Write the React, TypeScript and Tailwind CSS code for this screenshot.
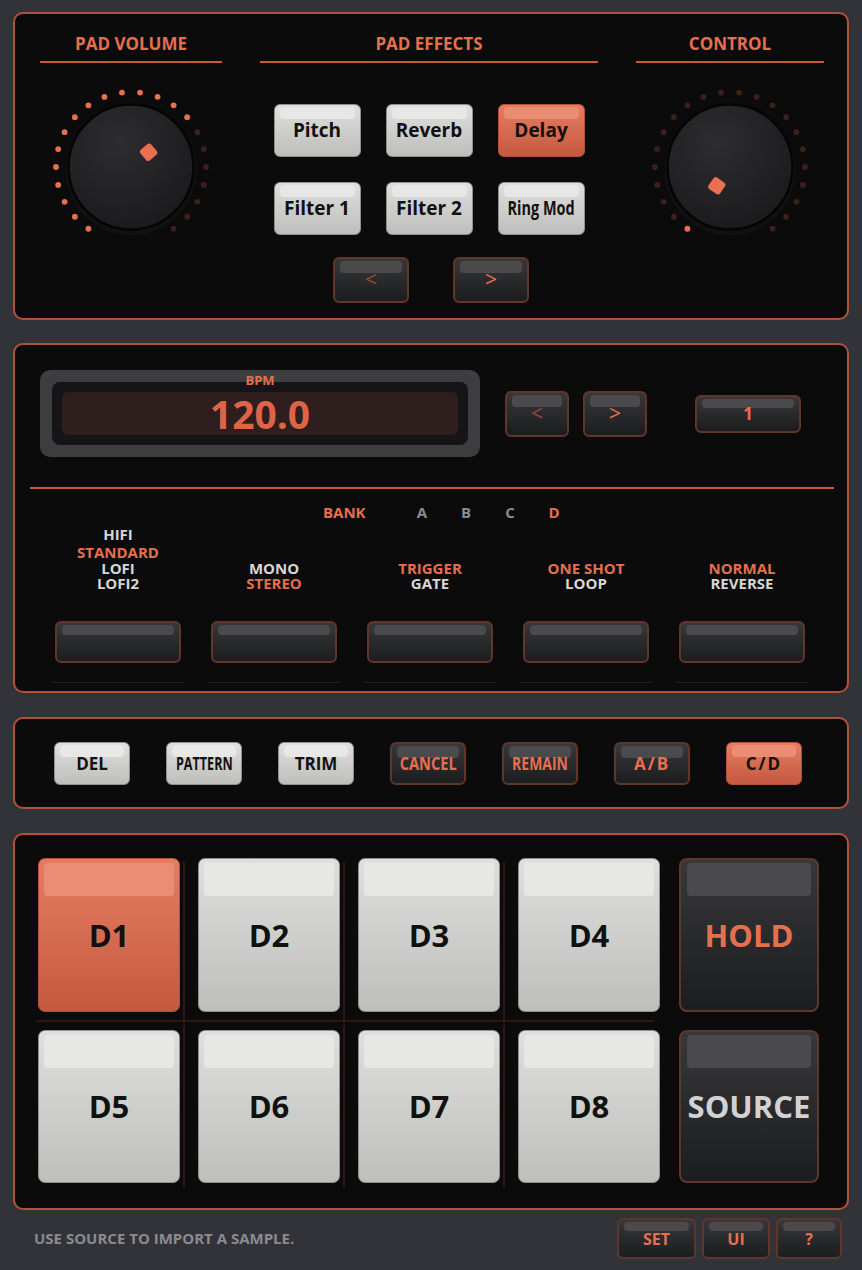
import React from "react";

type Variant = "light" | "dark" | "orange";

const body: Record<Variant, string> = {
  light: "border border-[#8f908c] bg-linear-to-b from-[#dfe0dd] to-[#bebfbb]",
  dark: "border-2 border-[#603629] bg-linear-to-b from-[#38383b] to-[#1c1d1f]",
  orange: "border border-[#b0523a] bg-linear-to-b from-[#e67d61] to-[#c45940]",
};

const ink: Record<Variant, string> = {
  light: "text-[#111]",
  dark: "text-[#e66f4e]",
  orange: "text-[#141010]",
};

const band: Record<Variant, string> = {
  light: "bg-[#e7e8e5]",
  dark: "bg-[#4a4a4d]",
  orange: "bg-[#eb8d74]",
};

function Btn({
  variant = "light",
  className = "",
  bandClass = "top-[2px] h-[12px] left-[5px] right-[5px]",
  textClass,
  children,
}: {
  variant?: Variant;
  className?: string;
  bandClass?: string;
  textClass?: string;
  children?: React.ReactNode;
}) {
  return (
    <div
      className={`relative flex items-center justify-center rounded-[6px] font-bold ${body[variant]} ${className}`}
    >
      <div className={`absolute rounded-[4px] ${band[variant]} ${bandClass}`} />
      <span className={`relative ${textClass ?? ink[variant]}`}>{children}</span>
    </div>
  );
}

function Knob({ id, lit, angle }: { id: string; lit: number; angle: number }) {
  const c = 85;
  const order = Array.from({ length: 26 }, (_, k) => (k + 15) % 26).filter(
    (k) => k < 11 || k > 14
  );
  const a = (angle * Math.PI) / 180;
  const ix = c + 23 * Math.sin(a);
  const iy = c - 23 * Math.cos(a);
  return (
    <svg width="170" height="170" viewBox="0 0 170 170">
      <defs>
        <radialGradient id={`kg-${id}`} cx="0.4" cy="0.3" r="0.8">
          <stop offset="0" stopColor="#2d2d30" />
          <stop offset="1" stopColor="#19191b" />
        </radialGradient>
      </defs>
      {order.map((k, i) => {
        const t = ((6.923 + 13.846 * k) * Math.PI) / 180;
        return (
          <circle
            key={k}
            cx={c + 75 * Math.sin(t)}
            cy={c - 75 * Math.cos(t)}
            r="2.9"
            fill={i < lit ? "#e8704f" : "#3c2019"}
          />
        );
      })}
      <circle cx={c} cy={c + 3} r="65.5" fill="#111112" />
      <circle cx={c} cy={c} r="62.5" fill={`url(#kg-${id})`} stroke="#050505" strokeWidth="2.5" />
      <rect
        x={ix - 7}
        y={iy - 7}
        width="14"
        height="14"
        rx="3"
        fill="#e8704f"
        transform={`rotate(${angle} ${ix} ${iy})`}
      />
    </svg>
  );
}

function Header({ children }: { children: React.ReactNode }) {
  return (
    <div className="border-b-2 border-[#c9583b] pt-[20px] pb-[7px] text-center text-[17px] leading-[20px] font-bold text-[#e66f4e]">
      {children}
    </div>
  );
}

const panel = "rounded-[10px] border-2 border-[#b2513a] bg-[#0b0b0b]";

const modes: { lines: [string, boolean][] }[] = [
  { lines: [["HIFI", false], ["STANDARD", true], ["LOFI", false], ["LOFI2", false]] },
  { lines: [["MONO", false], ["STEREO", true]] },
  { lines: [["TRIGGER", true], ["GATE", false]] },
  { lines: [["ONE SHOT", true], ["LOOP", false]] },
  { lines: [["NORMAL", true], ["REVERSE", false]] },
];

const small = "top-[2px] h-[9px] left-[5px] right-[5px]";

export default function App() {
  return (
    <div className="h-[1270px] w-[862px] bg-[#323338] px-[13px] pt-[12px] font-['Open_Sans','Noto_Sans',sans-serif]">
      {/* top: volume / effects / control */}
      <div className={`${panel} flex h-[308px] gap-[38px] pl-[25px] pr-[23px]`}>
        <div className="flex w-[182px] flex-col items-center">
          <div className="w-full">
            <Header>PAD VOLUME</Header>
          </div>
          <div className="mt-[19px]">
            <Knob id="vol" lit={15} angle={50} />
          </div>
        </div>

        <div className="flex w-[338px] flex-col">
          <Header>PAD EFFECTS</Header>
          <div className="mt-[41px] grid grid-cols-[87px_87px_87px] justify-center gap-[25px] text-[19px]">
            <Btn className="h-[53px]">Pitch</Btn>
            <Btn className="h-[53px]">Reverb</Btn>
            <Btn variant="orange" className="h-[53px]">Delay</Btn>
            <Btn className="h-[53px]">Filter 1</Btn>
            <Btn className="h-[53px]">Filter 2</Btn>
            <Btn className="h-[53px]">
              <span className="inline-block scale-x-[0.76] whitespace-nowrap">Ring Mod</span>
            </Btn>
          </div>
          <div className="mt-[22px] flex justify-center gap-[44px] pl-[4px]">
            <Btn variant="dark" className="h-[46px] w-[76px] text-[21px]" textClass="font-normal text-[#8f4a38]">
              &lt;
            </Btn>
            <Btn variant="dark" className="h-[46px] w-[76px] text-[21px]" textClass="font-normal text-[#e66f4e]">
              &gt;
            </Btn>
          </div>
        </div>

        <div className="flex w-[188px] flex-col items-center">
          <div className="w-full">
            <Header>CONTROL</Header>
          </div>
          <div className="mt-[19px]">
            <Knob id="ctl" lit={1} angle={215} />
          </div>
        </div>
      </div>

      {/* bpm / bank / modes */}
      <div className={`${panel} mt-[23px] h-[350px] pt-[25px]`}>
        <div className="flex items-center pl-[25px]">
          <div className="relative h-[87px] w-[440px] rounded-[10px] bg-[#3d3d40] p-[12px]">
            <div className="h-full rounded-[8px] bg-[#151517] p-[10px]">
              <div className="flex h-full items-center justify-center rounded-[6px] bg-[#2e1e1e] text-[39px] leading-none font-bold text-[#dd6447]">
                120.0
              </div>
            </div>
            <div className="absolute top-[2px] left-0 w-full text-center text-[13px] leading-[16px] font-bold text-[#e66f4e]">
              BPM
            </div>
          </div>
          <Btn variant="dark" className="ml-[25px] h-[46px] w-[64px] text-[21px]" textClass="font-normal text-[#8f4a38]">
            &lt;
          </Btn>
          <Btn variant="dark" className="ml-[14px] h-[46px] w-[64px] text-[21px]" textClass="font-normal text-[#e66f4e]">
            &gt;
          </Btn>
          <Btn variant="dark" className="ml-[48px] h-[38px] w-[106px] text-[17px]" bandClass={small}>
            1
          </Btn>
        </div>

        <div className="mt-[30px] mr-[13px] ml-[15px] h-[2px] bg-[#c9583b]" />

        <div className="mt-[15px] flex h-[16px] items-center pl-[308px] text-[15px] leading-[16px] font-bold">
          <div className="w-[77px] text-[#e66f4e]">BANK</div>
          <div className="w-[44px] text-center text-[#8b8b8d]">A</div>
          <div className="w-[44px] text-center text-[#8b8b8d]">B</div>
          <div className="w-[44px] text-center text-[#8b8b8d]">C</div>
          <div className="w-[44px] text-center text-[#e66f4e]">D</div>
        </div>

        <div className="mt-[5px] grid grid-cols-[repeat(5,156px)] pl-[25px]">
          {modes.map((m, i) => (
            <div key={i} className="flex flex-col items-center">
              <div className="flex h-[66px] flex-col justify-end text-center text-[15px] font-bold">
                {m.lines.map(([t, on], j) => (
                  <div
                    key={t}
                    className={`${m.lines.length - j > 2 ? "h-[18px] leading-[18px]" : "h-[15px] leading-[15px]"} ${
                      on ? "text-[#e66f4e]" : "text-[#d6d6d6]"
                    }`}
                  >
                    {t}
                  </div>
                ))}
              </div>
              <Btn variant="dark" className="mt-[30px] h-[42px] w-[126px]" bandClass="top-[2px] h-[10px] left-[5px] right-[5px]" />
              <div className="mt-[19px] h-[1px] w-[132px] bg-[#2a1d1a]" />
            </div>
          ))}
        </div>
      </div>

      {/* edit buttons */}
      <div className={`${panel} mt-[24px] flex h-[92px] gap-[36px] pt-[23px] pl-[39px] text-[17px]`}>
        <Btn className="h-[43px] w-[76px]">DEL</Btn>
        <Btn className="h-[43px] w-[76px]">
          <span className="inline-block scale-x-[0.74]">PATTERN</span>
        </Btn>
        <Btn className="h-[43px] w-[76px]">TRIM</Btn>
        <Btn variant="dark" className="h-[43px] w-[76px]">
          <span className="inline-block scale-x-[0.86]">CANCEL</span>
        </Btn>
        <Btn variant="dark" className="h-[43px] w-[76px]">
          <span className="inline-block scale-x-[0.82]">REMAIN</span>
        </Btn>
        <Btn variant="dark" className="h-[43px] w-[76px] tracking-[2px]">A/B</Btn>
        <Btn variant="orange" className="h-[43px] w-[76px] tracking-[2px]">C/D</Btn>
      </div>

      {/* pads */}
      <div className={`${panel} relative mt-[24px] h-[377px] pt-[23px] pl-[23px]`}>
        <div className="absolute top-[185px] left-[21px] h-[2px] w-[618px] bg-[#2c1813]" />
        <div className="absolute top-[27px] left-[168px] h-[326px] w-[2px] bg-[#2c1813]" />
        <div className="absolute top-[27px] left-[328px] h-[326px] w-[2px] bg-[#2c1813]" />
        <div className="absolute top-[27px] left-[488px] h-[326px] w-[2px] bg-[#2c1813]" />

        <div className="flex flex-col gap-[18px] text-[31px]">
          {[
            ["D1", "D2", "D3", "D4", "HOLD"],
            ["D5", "D6", "D7", "D8", "SOURCE"],
          ].map((row, r) => (
            <div key={r} className={`flex ${r === 0 ? "h-[154px]" : "h-[153px]"}`}>
              {row.slice(0, 4).map((p) => (
                <Btn
                  key={p}
                  variant={p === "D1" ? "orange" : "light"}
                  className="mr-[18px] h-full w-[142px] rounded-[7px]"
                  bandClass="top-[4px] h-[33px] left-[5px] right-[5px]"
                >
                  {p}
                </Btn>
              ))}
              <Btn
                variant="dark"
                className="ml-[1px] h-full w-[140px] rounded-[8px]"
                bandClass="top-[3px] h-[33px] left-[6px] right-[6px]"
                textClass={r === 1 ? "text-[#d2d2d2]" : "text-[#e66f4e]"}
              >
                {row[4]}
              </Btn>
            </div>
          ))}
        </div>
      </div>

      {/* footer */}
      <div className="flex items-center justify-between pt-[8px] pr-[7px] pl-[21px]">
        <div className="text-[15px] font-bold text-[#8a8b90]">USE SOURCE TO IMPORT A SAMPLE.</div>
        <div className="flex gap-[6px] text-[16px]">
          <Btn variant="dark" className="h-[41px] w-[79px]" bandClass={small}>SET</Btn>
          <Btn variant="dark" className="h-[41px] w-[68px]" bandClass={small}>UI</Btn>
          <Btn variant="dark" className="h-[41px] w-[66px]" bandClass={small}>?</Btn>
        </div>
      </div>
    </div>
  );
}
